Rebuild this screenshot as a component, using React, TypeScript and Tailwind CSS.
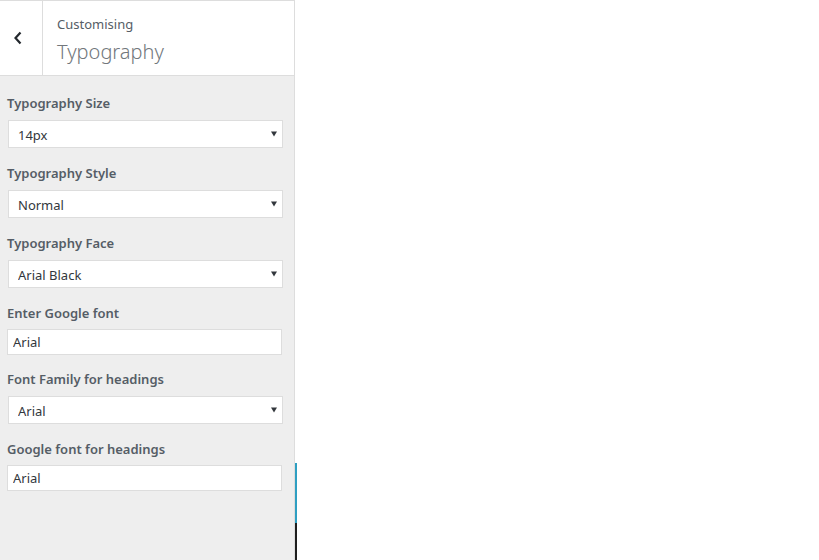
import React from 'react';

const FONT = { fontFamily: '"Noto Sans", "Open Sans", sans-serif' };

type Field =
  | { kind: 'select'; label: string; value: string; options: string[] }
  | { kind: 'text'; label: string; value: string };

const FIELDS: Field[] = [
  { kind: 'select', label: 'Typography Size', value: '14px', options: ['12px', '13px', '14px', '15px', '16px'] },
  { kind: 'select', label: 'Typography Style', value: 'Normal', options: ['Normal', 'Italic', 'Bold'] },
  { kind: 'select', label: 'Typography Face', value: 'Arial Black', options: ['Arial', 'Arial Black', 'Georgia', 'Verdana'] },
  { kind: 'text', label: 'Enter Google font', value: 'Arial' },
  { kind: 'select', label: 'Font Family for headings', value: 'Arial', options: ['Arial', 'Georgia', 'Verdana'] },
  { kind: 'text', label: 'Google font for headings', value: 'Arial' },
];

const SelectControl: React.FC<{ value: string; options: string[] }> = ({ value, options }) => (
  <div className="relative ml-[8px] w-[275px]">
    <select
      defaultValue={value}
      style={FONT}
      className="block h-[28px] w-full appearance-none border border-[#dddddd] bg-white pl-[9px] pr-[20px] pt-[3px] text-[13px] text-[#32373c] outline-none"
    >
      {options.map(o => (
        <option key={o} value={o}>{o}</option>
      ))}
    </select>
    <svg className="pointer-events-none absolute right-[6px] top-[11px]" width="6" height="6" viewBox="0 0 6 6">
      <path d="M0 0.5 H6 L3 5.5 Z" fill="#32373c" />
    </svg>
  </div>
);

const TextControl: React.FC<{ value: string }> = ({ value }) => (
  <input
    type="text"
    defaultValue={value}
    style={FONT}
    className="ml-[7px] block h-[26px] w-[275px] border border-[#dddddd] bg-white px-[5px] text-[13px] text-[#32373c] outline-none"
  />
);

export default function App() {
  return (
    <div className="relative h-[560px] w-[819px] overflow-hidden bg-white" style={FONT}>
      <aside className="flex h-full w-[295px] flex-col border-r border-[#dddddd] bg-[#eeeeee]">
        <header className="flex h-[76px] shrink-0 border-y border-[#dddddd] bg-white">
          <button className="flex w-[43px] items-center justify-start border-r border-[#dddddd] pl-[13px]">
            <svg width="10" height="14" viewBox="0 0 10 14">
              <path d="M7.5 1.5 L2.5 7 L7.5 12.5" fill="none" stroke="#23282d" strokeWidth="2.2" />
            </svg>
          </button>
          <div className="pl-[14px] pt-[14px]">
            <div className="text-[13px] leading-[18px] text-[#555d66]">Customising</div>
            <div className="mt-[7px] text-[20px] font-light leading-[24px] text-[#72777c]">Typography</div>
          </div>
        </header>

        <div className="flex flex-col pt-[18px]">
          {FIELDS.map(f => (
            <div key={f.label} className={`flex flex-col ${f.kind === 'select' ? 'mb-[16px]' : 'mb-[15px]'}`}>
              <label
                className={`${f.kind === 'select' ? 'mb-[8px]' : 'mb-[7px]'} pl-[7px] text-[13px] font-semibold leading-[18px] text-[#555d66]`}
              >
                {f.label}
              </label>
              {f.kind === 'select' ? <SelectControl value={f.value} options={f.options} /> : <TextControl value={f.value} />}
            </div>
          ))}
        </div>
      </aside>

      {/* preview edge strip */}
      <div className="absolute left-[295px] top-[463px] h-[60px] w-[2px] bg-[#2e9fc2]" />
      <div className="absolute left-[295px] top-[523px] h-[37px] w-[2px] bg-[#1e1e1e]" />
    </div>
  );
}
